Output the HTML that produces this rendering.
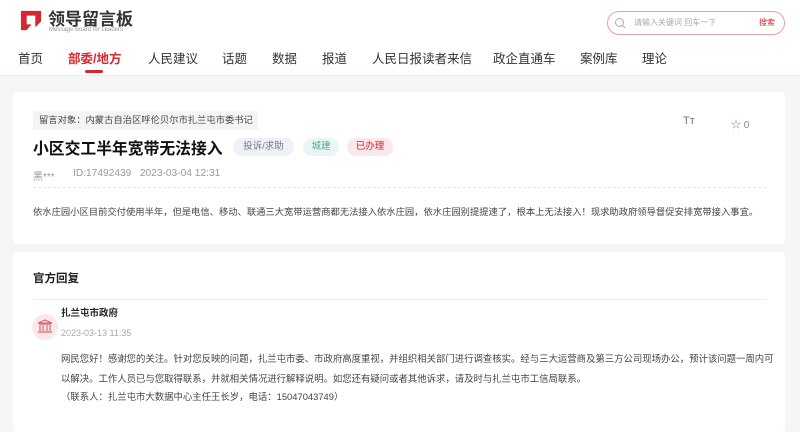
<!DOCTYPE html>
<html><head><meta charset="utf-8"><style>
*{margin:0;padding:0;box-sizing:border-box}
body{width:800px;height:420px;overflow:hidden;background:#f5f6f8;font-family:"Liberation Sans","Noto Sans CJK SC",sans-serif;color:#333;position:relative}
.a{position:absolute;white-space:nowrap}
.hdr{position:absolute;left:0;top:0;width:800px;height:76px;background:#fff;border-bottom:1px solid #eee}
.nav{font-size:12.5px;color:#333;top:48px}
.card{position:absolute;left:13px;width:772px;background:#fff;border-radius:4px}
.tag{position:absolute;height:18px;line-height:18px;border-radius:9px;font-size:9.5px;text-align:center;top:138px}
</style></head><body>
<div class="hdr"></div>
<svg class="a" style="left:19px;top:8px" width="24" height="24" viewBox="0 0 25 25"><path d="M2 3h21v11l-6 6V8H8v9h5l-5 6H2z" fill="#d7262f"/></svg>
<div class="a" style="left:48px;top:5px;font-size:17px;font-weight:bold;color:#333">领导留言板</div>
<div class="a" style="left:49px;top:27px;font-size:6px;color:#999">Message Board for Leaders</div>
<div class="a nav" style="left:18px">首页</div>
<div class="a nav" style="left:68px;color:#d7262f;font-weight:bold">部委/地方</div>
<div class="a" style="left:85px;top:70px;width:18px;height:3px;background:#d7262f;border-radius:2px"></div>
<div class="a nav" style="left:148px">人民建议</div>
<div class="a nav" style="left:222px">话题</div>
<div class="a nav" style="left:272px">数据</div>
<div class="a nav" style="left:322px">报道</div>
<div class="a nav" style="left:372px">人民日报读者来信</div>
<div class="a nav" style="left:493px">政企直通车</div>
<div class="a nav" style="left:580px">案例库</div>
<div class="a nav" style="left:642px">理论</div>
<div class="a" style="left:607px;top:11px;width:178px;height:24px;border:1px solid #e8a0a8;border-radius:12px"></div>
<svg class="a" style="left:614px;top:17px" width="12" height="12" viewBox="0 0 12 12"><circle cx="5.5" cy="5.5" r="4" fill="none" stroke="#aaa" stroke-width="1"/><path d="M8.5 8.5L11 11" stroke="#aaa"/></svg>
<div class="a" style="left:634px;top:17px;font-size:8px;color:#aaa">请输入关键词 回车一下</div>
<div class="a" style="left:759px;top:17px;font-size:8px;color:#d7262f">搜索</div>

<div class="card" style="top:92px;height:152px"></div>
<div class="a" style="left:33px;top:111px;width:225px;height:19px;background:#f3f4f6;font-size:9.3px;line-height:19px;padding-left:6px;color:#444">留言对象：内蒙古自治区呼伦贝尔市扎兰屯市委书记</div>
<div class="a" style="left:33px;top:136px;font-size:15.8px;font-weight:bold;color:#111">小区交工半年宽带无法接入</div>
<div class="tag" style="left:233px;width:61px;background:#eef1f7;color:#778">投诉/求助</div>
<div class="tag" style="left:303px;width:36px;background:#eaf6f5;color:#5a8">城建</div>
<div class="tag" style="left:347px;width:46px;background:#fbe8ea;color:#d7262f">已办理</div>
<div class="a" style="left:33px;top:168px;font-size:10px;color:#999">黑***</div>
<div class="a" style="left:73px;top:168px;font-size:10.2px;color:#999">ID:17492439&nbsp;&nbsp;&nbsp;2023-03-04 12:31</div>
<div class="a" style="left:33px;top:187px;width:733px;border-top:1px dashed #e5e5e5"></div>
<div class="a" style="left:33px;top:204px;font-size:9.3px;color:#444">依水庄园小区目前交付使用半年，但是电信、移动、联通三大宽带运营商都无法接入依水庄园，依水庄园别提提速了，根本上无法接入！现求助政府领导督促安排宽带接入事宜。</div>
<div class="a" style="left:683px;top:115px;font-size:11px;color:#777">Tт</div>
<div class="a" style="left:731px;top:116px;font-size:10px;color:#888">☆ 0</div>

<div class="card" style="top:252px;height:180px"></div>
<div class="a" style="left:33px;top:270px;font-size:11.5px;font-weight:bold;color:#222">官方回复</div>
<div class="a" style="left:33px;top:299px;width:733px;border-top:1px solid #eee"></div>
<div class="a" style="left:32px;top:314px;width:26px;height:26px;border-radius:50%;background:#fbe9ea"></div>
<svg class="a" style="left:37px;top:319px" width="16" height="15" viewBox="0 0 16 15"><path d="M1 4L8 1l7 3z M2 5h12 M3 6v6 M6 6v6 M10 6v6 M13 6v6 M1 13h14" fill="none" stroke="#d76a70" stroke-width="1.2"/></svg>
<div class="a" style="left:61px;top:305px;font-size:9.5px;font-weight:bold;color:#222">扎兰屯市政府</div>
<div class="a" style="left:61px;top:328px;font-size:9px;color:#aaa">2023-03-13 11:35</div>
<div class="a" style="left:61px;top:351px;font-size:9.4px;color:#444">网民您好！感谢您的关注。针对您反映的问题，扎兰屯市委、市政府高度重视，并组织相关部门进行调查核实。经与三大运营商及第三方公司现场办公，预计该问题一周内可</div>
<div class="a" style="left:61px;top:371px;font-size:9.4px;color:#444">以解决。工作人员已与您取得联系，并就相关情况进行解释说明。如您还有疑问或者其他诉求，请及时与扎兰屯市工信局联系。</div>
<div class="a" style="left:61px;top:389px;font-size:9.4px;color:#444">（联系人：扎兰屯市大数据中心主任王长岁，电话：15047043749）</div>
</body></html>
